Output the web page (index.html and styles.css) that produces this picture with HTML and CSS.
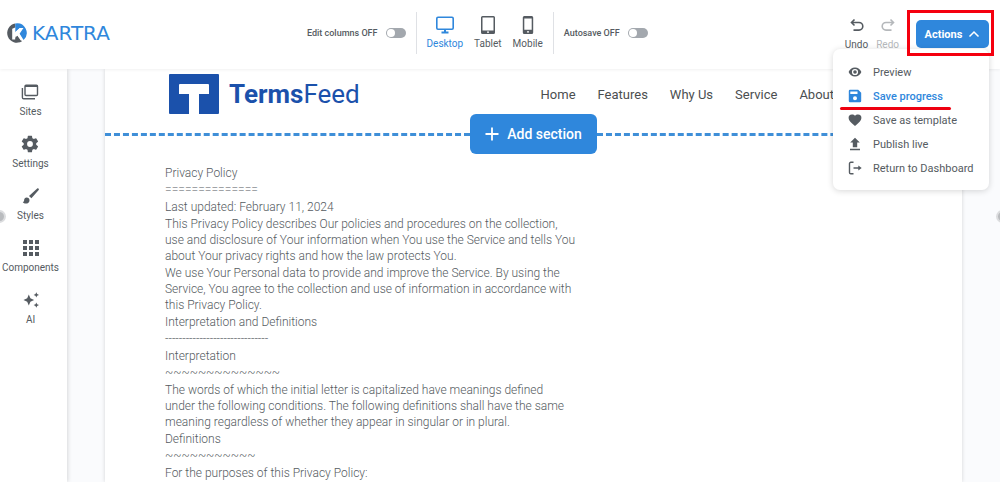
FILE: index.html
```html
<!DOCTYPE html>
<html lang="en">
<head>
    <meta charset="UTF-8">
    <meta name="viewport" content="width=device-width, initial-scale=1.0">
    <title>Kartra page builder</title>
    <link rel="stylesheet" href="styles.css">
</head>
<body>
    <header class="topbar">
        <a class="brand" href="#">
            <svg width="20" height="20" viewBox="0 0 20 20">
                <path fill="#555b61" d="M8.2.4A9.7 9.7 0 1 0 15 18.2l-4.600-5.600-2.200 2.100z"/>
                <path fill="#2f87dc" d="M8.200.4A9.700 9.700 0 0 1 16.600 17l-4-6.200 3.800-5.800h-3.600L8.200 9z"/>
                <path fill="#fff" d="M5.200 5.800l3-1.200v4.800l4.600-4.400h3.600l-4.800 4.600 4 7.400-1.800.6-4-5.800-1.600 1.400v3.200H5.200z"/>
            </svg>
            <span>KARTRA</span>
        </a>

        <div class="view-tools">
            <label class="switch">Edit columns OFF <input type="checkbox"></label>
            <div class="devices">
                <button class="tool active" type="button">
                    <svg width="20" height="20" viewBox="0 0 20 20" fill="none" stroke="currentColor" stroke-width="1.600">
                        <rect x="1.800" y="2.300" width="16.400" height="12" rx="1.200"/>
                        <path stroke-width="2" d="M10 14.500v2.500M6.500 17.400h7"/>
                    </svg>
                    Desktop
                </button>
                <button class="tool" type="button">
                    <svg width="20" height="20" viewBox="0 0 20 20" fill="currentColor">
                        <path fill-rule="evenodd" d="M4.500 1h11a1.500 1.500 0 0 1 1.500 1.500v15a1.500 1.500 0 0 1-1.500 1.500h-11A1.500 1.500 0 0 1 3 17.500v-15A1.500 1.500 0 0 1 4.500 1zm0 1.600v12.900h11V2.600zM9 16.500v1.200h2v-1.200z"/>
                    </svg>
                    Tablet
                </button>
                <button class="tool" type="button">
                    <svg width="20" height="20" viewBox="0 0 20 20" fill="currentColor">
                        <path fill-rule="evenodd" d="M6.300 1h7.400A1.500 1.500 0 0 1 15.200 2.500v15a1.500 1.500 0 0 1-1.500 1.500H6.300a1.500 1.500 0 0 1-1.500-1.500v-15A1.500 1.500 0 0 1 6.300 1zm0 2.400v11.400h7.400V3.400zM9 16.200v1.300h2v-1.300z"/>
                    </svg>
                    Mobile
                </button>
            </div>
            <label class="switch">Autosave OFF <input type="checkbox"></label>
        </div>

        <div class="page-tools">
            <button class="tool" type="button">
                <svg width="16" height="16" viewBox="0 0 16 16" fill="none" stroke="currentColor" stroke-width="1.600">
                    <path d="M5.500 1.500L2.500 4.500l3 3M2.500 4.500h7.500a3.800 3.800 0 0 1 0 7.600H4.500"/>
                </svg>
                Undo
            </button>
            <button class="tool" type="button" disabled>
                <svg width="16" height="16" viewBox="0 0 16 16" fill="none" stroke="currentColor" stroke-width="1.600">
                    <path d="M10.500 1.500l3 3-3 3M13.500 4.500H6a3.800 3.800 0 0 0 0 7.600h5.500"/>
                </svg>
                Redo
            </button>
            <div class="actions">
                <button class="btn" type="button" aria-expanded="true">
                    Actions
                    <svg width="12" height="12" viewBox="0 0 12 12" fill="none" stroke="currentColor" stroke-width="1.500">
                        <path d="M1.500 8.500L6 4l4.500 4.500"/>
                    </svg>
                </button>
                <!-- Actions menu -->
                <ul class="menu">
                    <li><a href="#">
                        <svg width="14" height="14" viewBox="0 0 14 14" fill="currentColor">
                            <path fill-rule="evenodd" d="M7 2.500c2.900 0 5.400 1.800 6.400 4.500-1 2.700-3.500 4.500-6.400 4.500S1.600 9.700.6 7C1.600 4.300 4.100 2.500 7 2.500zm0 1.400a3.100 3.100 0 1 0 0 6.200 3.100 3.100 0 0 0 0-6.200zm0 1.300a1.800 1.800 0 1 1 0 3.600 1.800 1.800 0 0 1 0-3.600z"/>
                        </svg>
                        Preview</a></li>
                    <li><a class="current" href="#">
                        <svg width="14" height="14" viewBox="0 0 14 14" fill="currentColor">
                            <path fill-rule="evenodd" d="M2 .8h8.200l3 3V12a1.200 1.200 0 0 1-1.200 1.200H2A1.200 1.200 0 0 1 .8 12V2A1.200 1.200 0 0 1 2 .8zM2.300 2.400v2.700h7.200V2.400zM7 7.300a2 2 0 1 0 0 4 2 2 0 0 0 0-4z"/>
                        </svg>
                        Save progress</a></li>
                    <li><a href="#">
                        <svg width="14" height="14" viewBox="0 0 14 14" fill="currentColor">
                            <path d="M7 13L6.100 12.200C2.800 9.200.6 7.300.6 4.900A3.400 3.400 0 0 1 4.100 1.400c1.100 0 2.200.5 2.900 1.400.7-.9 1.800-1.400 2.900-1.400a3.400 3.400 0 0 1 3.500 3.500c0 2.400-2.200 4.300-5.500 7.300z"/>
                        </svg>
                        Save as template</a></li>
                    <li><a href="#">
                        <svg width="14" height="14" viewBox="0 0 14 14" fill="currentColor">
                            <path d="M7 .8l4.800 4.800H9.200v4.600H4.800V5.600H2.200zM2 11.800h10v1.500H2z"/>
                        </svg>
                        Publish live</a></li>
                    <li><a href="#">
                        <svg width="14" height="14" viewBox="0 0 14 14" fill="none" stroke="currentColor" stroke-width="1.400">
                            <path d="M5.500 1.300H2.800a1.300 1.300 0 0 0-1.300 1.300v8.800a1.300 1.300 0 0 0 1.300 1.300h2.700M5.500 7H12"/>
                            <path fill="currentColor" stroke="none" d="M10.300 4.400L13.700 7l-3.400 2.600z"/>
                        </svg>
                        Return to Dashboard</a></li>
                </ul>
            </div>
        </div>
    </header>

    <div class="workspace">
        <nav class="sidebar">
            <button class="side-item" type="button">
                <svg width="20" height="20" viewBox="0 0 20 20" fill="none" stroke="currentColor" stroke-width="1.400">
                    <rect x="5" y="3.200" width="12.500" height="10.300" rx="1"/>
                    <path stroke-width="2" d="M5 4h12.500"/>
                    <path d="M2.400 6v9.500a1.300 1.300 0 0 0 1.300 1.300H15"/>
                </svg>
                Sites
            </button>
            <button class="side-item" type="button">
                <svg width="20" height="20" viewBox="0 0 24 24" fill="currentColor">
                    <path d="M19.400 13a7.500 7.500 0 0 0 0-2l2.100-1.600a.5.5 0 0 0 .1-.6l-2-3.500a.5.5 0 0 0-.6-.2l-2.500 1a7.300 7.300 0 0 0-1.700-1l-.4-2.600a.5.5 0 0 0-.5-.5h-4a.5.5 0 0 0-.5.500L9 5.100a7.300 7.300 0 0 0-1.700 1l-2.500-1a.5.5 0 0 0-.6.200l-2 3.500a.5.5 0 0 0 .1.600L4.500 11a7.500 7.500 0 0 0 0 2l-2.200 1.600a.5.5 0 0 0-.1.600l2 3.500c.1.200.4.300.6.200l2.500-1a7.300 7.300 0 0 0 1.700 1l.4 2.600c0 .3.200.5.500.5h4c.3 0 .5-.2.500-.5l.4-2.600a7.300 7.300 0 0 0 1.700-1l2.500 1c.2.100.5 0 .6-.2l2-3.500a.5.5 0 0 0-.1-.6zM12 15.500a3.500 3.500 0 1 1 0-7 3.500 3.500 0 0 1 0 7z"/>
                </svg>
                Settings
            </button>
            <button class="side-item" type="button">
                <svg width="20" height="20" viewBox="0 0 20 20" fill="currentColor">
                    <path d="M5.600 11.500a2.900 2.900 0 0 1 2.900 2.900c0 2-1.600 3.200-3.600 3.200-1.300 0-2.500-.6-3.100-1.600 1-.1 1.300-.8 1.300-1.700 0-1.600 1.100-2.800 2.500-2.800zM17.700 3.900L10.400 12.300 8 9.900l8.200-7.500c.9-.7 2.300.6 1.500 1.500z"/>
                </svg>
                Styles
            </button>
            <button class="side-item" type="button">
                <svg width="20" height="20" viewBox="0 0 20 20" fill="currentColor">
                    <path d="M2 2h4v4H2zM8 2h4v4H8zM14 2h4v4h-4zM2 8h4v4H2zM8 8h4v4H8zM14 8h4v4h-4zM2 14h4v4H2zM8 14h4v4H8zM14 14h4v4h-4z"/>
                </svg>
                Components
            </button>
            <button class="side-item" type="button">
                <svg width="20" height="20" viewBox="0 0 20 20" fill="currentColor">
                    <path d="M7.800 4.600l1.600 3.700 3.700 1.700-3.700 1.700-1.600 3.700-1.600-3.700L2.500 10l3.700-1.700zM15.300 2.200l.8 1.900 1.900.8-1.900.8-.8 1.900-.8-1.900-1.900-.8 1.900-.8zM15.300 12.400l.8 1.900 1.900.8-1.900.8-.8 1.900-.8-1.900-1.900-.8 1.900-.8z"/>
                </svg>
                AI
            </button>
        </nav>
        <span class="handle handle-left"></span>
        <span class="handle handle-right"></span>

        <main class="canvas">
            <div class="page">
                <div class="site-header">
                    <a class="site-logo" href="#">
                        <svg width="50" height="40" viewBox="0 0 50 40">
                            <path fill="#1b51ab" fill-rule="evenodd" d="M1 0h48a1 1 0 0 1 1 1v38a1 1 0 0 1-1 1H30V20h10V11a1 1 0 0 0-1-1H11a1 1 0 0 0-1 1v9h10v20H1a1 1 0 0 1-1-1V1a1 1 0 0 1 1-1z"/>
                        </svg>
                        <span><b>Terms</b>Feed</span>
                    </a>
                    <nav class="site-nav">
                        <a href="#">Home</a>
                        <a href="#">Features</a>
                        <a href="#">Why Us</a>
                        <a href="#">Service</a>
                        <a href="#">About</a>
                    </nav>
                </div>

                <div class="add-row">
                    <button class="btn btn-add" type="button">
                        <svg width="14" height="14" viewBox="0 0 14 14" fill="none" stroke="currentColor" stroke-width="1.800">
                            <path d="M7 .5v13M.5 7h13"/>
                        </svg>
                        Add section
                    </button>
                </div>

                <article class="policy">
                    <p>Privacy Policy</p>
                    <p>==============</p>
                    <p>Last updated: February 11, 2024</p>
                    <p>This Privacy Policy describes Our policies and procedures on the collection,<br>
                    use and disclosure of Your information when You use the Service and tells You<br>
                    about Your privacy rights and how the law protects You.</p>
                    <p>We use Your Personal data to provide and improve the Service. By using the<br>
                    Service, You agree to the collection and use of information in accordance with<br>
                    this Privacy Policy.</p>
                    <p>Interpretation and Definitions</p>
                    <p>------------------------------</p>
                    <p>Interpretation</p>
                    <p>~~~~~~~~~~~~~~</p>
                    <p>The words of which the initial letter is capitalized have meanings defined<br>
                    under the following conditions. The following definitions shall have the same<br>
                    meaning regardless of whether they appear in singular or in plural.</p>
                    <p>Definitions</p>
                    <p>~~~~~~~~~~~</p>
                    <p>For the purposes of this Privacy Policy:</p>
                </article>
            </div>
        </main>
    </div>
</body>
</html>
```

FILE: styles.css
```css
* {
    box-sizing: border-box;
}

body {
    margin: 0;
    height: 100vh;
    display: flex;
    flex-direction: column;
    overflow: hidden;
    font-family: Roboto, "Liberation Sans", sans-serif;
    color: #555b61;
    background: #fff;
}

a {
    color: inherit;
    text-decoration: none;
}

button {
    border: 0;
    padding: 0;
    background: none;
    color: inherit;
    font-family: inherit;
    cursor: pointer;
}

svg {
    display: block;
    flex: none;
}

/* Top bar */
.topbar {
    position: relative;
    z-index: 2;
    flex: none;
    display: flex;
    align-items: center;
    justify-content: space-between;
    height: 69px;
    padding: 0 6px 3px 7px;
    background: #fff;
    box-shadow: 0 1px 3px rgba(0, 0, 0, 0.06);
}

.brand {
    display: flex;
    align-items: center;
    gap: 5px;
    color: #2f87dc;
    font-family: "DejaVu Sans", sans-serif;
    font-size: 20px;
    line-height: 20px;
}

.view-tools {
    display: flex;
    align-items: center;
    gap: 10px;
}

.switch {
    display: flex;
    align-items: center;
    gap: 8px;
    font-size: 9px;
    font-weight: 500;
}

/* toggle: the track is the input, the knob is ::before */
.switch input {
    appearance: none;
    position: relative;
    width: 20px;
    height: 10px;
    margin: 0;
    border-radius: 5px;
    background: #a3a8ae;
}

.switch input::before {
    content: "";
    position: absolute;
    top: 1px;
    left: 1px;
    width: 8px;
    height: 8px;
    border-radius: 50%;
    background: #fff;
}

.switch input:checked::before {
    left: 11px;
}

.devices {
    display: flex;
    gap: 11px;
    padding: 3px 10px 4px;
    border-left: 1px solid #dfe1e5;
    border-right: 1px solid #dfe1e5;
}

.tool {
    display: flex;
    flex-direction: column;
    align-items: center;
    gap: 3px;
    font-size: 10px;
    line-height: 12px;
}

.tool.active {
    color: #2f87dc;
}

.tool:disabled {
    color: #b5b8bb;
}

.page-tools {
    display: flex;
    align-items: center;
    gap: 8px;
}

.page-tools .tool {
    gap: 5px;
    padding-top: 3px;
}

.btn {
    display: flex;
    align-items: center;
    justify-content: center;
    gap: 6px;
    border-radius: 5px;
    background: #2f87dc;
    color: #fff;
}

.actions {
    position: relative;
    padding: 10px 5px 8px 9px;
}

.actions .btn {
    width: 73px;
    height: 28px;
    font-size: 11px;
    font-weight: 700;
}

/* highlight frame, stays above the menu */
.actions::after {
    content: "";
    position: absolute;
    inset: 0;
    border: 3px solid #f5000f;
    pointer-events: none;
}

.menu {
    position: absolute;
    top: 39px;
    right: 5px;
    width: 156px;
    margin: 0;
    padding: 11px 0 10px;
    list-style: none;
    border-radius: 7px;
    background: #fff;
    box-shadow: 0 1px 6px rgba(0, 0, 0, 0.16);
    font-size: 11px;
}

.menu a {
    display: flex;
    align-items: center;
    gap: 11px;
    height: 24px;
    padding-left: 15px;
}

.menu .current {
    position: relative;
    color: #2f87dc;
    font-weight: 500;
}

.menu .current::after {
    content: "";
    position: absolute;
    left: 7px;
    bottom: -2px;
    width: 111px;
    height: 3px;
    border-radius: 2px;
    background: #ee0010;
}

/* Workspace */
.workspace {
    position: relative;
    flex: 1;
    display: flex;
    min-height: 0;
}

.sidebar {
    position: relative;
    z-index: 1;
    flex: none;
    display: flex;
    flex-direction: column;
    align-items: center;
    gap: 16px;
    width: 67px;
    padding: 13px 6px 0 0;
    box-shadow: 1px 0 4px rgba(0, 0, 0, 0.14);
    background: #fff;
}

.side-item {
    display: flex;
    flex-direction: column;
    align-items: center;
    gap: 4px;
    font-size: 10px;
    line-height: 12px;
}

.handle {
    position: absolute;
    z-index: 1;
    top: 141px;
    width: 13px;
    height: 13px;
    border: 2px solid #dcdddf;
    border-radius: 50%;
    background: #b9bbbe;
}

.handle-left {
    left: -7px;
}

.handle-right {
    right: -9px;
}

.canvas {
    flex: 1;
    min-width: 0;
    padding: 0 38px;
    background: #fafbfd;
}

.page {
    height: 100%;
    overflow: hidden;
    background: #fff;
    box-shadow: 0 0 4px rgba(0, 0, 0, 0.16);
}

.site-header {
    display: flex;
    align-items: center;
    justify-content: space-between;
    padding: 5px 128px 0 64px;
}

.site-logo {
    display: flex;
    align-items: center;
    gap: 10px;
    color: #1b51ab;
    font-size: 26px;
    line-height: 40px;
}

.site-nav {
    display: flex;
    gap: 22px;
    color: #4b4e50;
    font-size: 13px;
}

/* dashed line with the button in the middle */
.add-row {
    display: flex;
    align-items: center;
}

.add-row::before,
.add-row::after {
    content: "";
    flex: 1;
    border-top: 3px dashed #3f8fd8;
}

.btn-add {
    width: 127px;
    height: 40px;
    gap: 8px;
    border-radius: 6px;
    font-size: 14px;
    font-weight: 500;
}

.policy {
    display: flex;
    flex-direction: column;
    gap: 1px;
    padding: 11px 60px 0;
    font-size: 12px;
    font-weight: 300;
    line-height: 16px;
}

.policy p {
    margin: 0;
}
```
